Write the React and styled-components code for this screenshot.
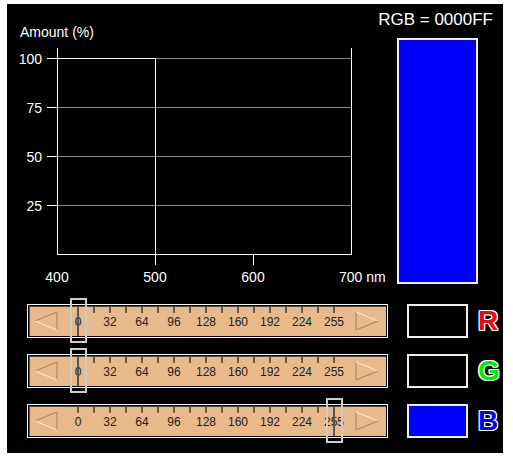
import styled, { createGlobalStyle } from "styled-components";

const GlobalStyle = createGlobalStyle`
    body {
        margin: 0;
        background: #ffffff;
        font-family: "Liberation Sans", Arial, sans-serif;
    }
`;

const channels = [
    {name: "R", value: 0, color: "#ff0000"},
    {name: "G", value: 0, color: "#00ee00"},
    {name: "B", value: 255, color: "#0000ff"},
];

const toHex = (v) => v.toString(16).padStart(2, "0").toUpperCase();

const Chart = () => {
    const gridY = [58.5, 107.5, 156.5, 205.5];
    const yLabels = ["100", "75", "50", "25"];
    return (
        <ChartSvg width="370" height="292" viewBox="7 4 370 292">
            <text x="20" y="37" fill="#fff" fontSize="14">Amount (%)</text>
            {gridY.map((y, i) => (
                <g key={y}>
                    <line x1="57" y1={y} x2="351" y2={y} stroke="#8c8c8c" strokeWidth="1"/>
                    <line x1="47" y1={y} x2="57" y2={y} stroke="#fff" strokeWidth="1"/>
                    <text x="42" y={y + 5} fill="#fff" fontSize="14" textAnchor="end">{yLabels[i]}</text>
                </g>
            ))}
            <line x1="57.5" y1="48" x2="57.5" y2="255" stroke="#fff"/>
            <line x1="351.5" y1="48" x2="351.5" y2="255" stroke="#fff"/>
            <line x1="57" y1="254.5" x2="352" y2="254.5" stroke="#fff"/>
            <line x1="155.5" y1="254" x2="155.5" y2="265" stroke="#fff"/>
            <line x1="253.5" y1="254" x2="253.5" y2="265" stroke="#fff"/>
            <polyline points="57.5,58.5 155.5,58.5 155.5,254.5" fill="none" stroke="#fff"/>
            <text x="57" y="282" fill="#fff" fontSize="14" textAnchor="middle">400</text>
            <text x="155" y="282" fill="#fff" fontSize="14" textAnchor="middle">500</text>
            <text x="253" y="282" fill="#fff" fontSize="14" textAnchor="middle">600</text>
            <text x="339" y="282" fill="#fff" fontSize="14">700 nm</text>
        </ChartSvg>
    );
};

const LeftArrow = () => (
    <svg width="33" height="30" viewBox="0 0 33 30">
        <line x1="6" y1="15" x2="28" y2="6" stroke="#a87f5c" strokeWidth="1"/>
        <line x1="28" y1="6" x2="28" y2="24" stroke="#a87f5c" strokeWidth="1"/>
        <line x1="6" y1="15" x2="28" y2="24" stroke="#fbeee0" strokeWidth="1"/>
    </svg>
);

const RightArrow = () => (
    <svg width="36" height="30" viewBox="0 0 36 30">
        <line x1="6" y1="6" x2="6" y2="24" stroke="#a87f5c" strokeWidth="1"/>
        <line x1="6" y1="6" x2="28" y2="15" stroke="#fbeee0" strokeWidth="1"/>
        <line x1="6" y1="24" x2="28" y2="15" stroke="#a87f5c" strokeWidth="1"/>
    </svg>
);

const labels = [0, 32, 64, 96, 128, 160, 192, 224, 255];

const Slider = ({value}) => (
    <Track>
        <Rail>
            <ArrowBox $w={33}><LeftArrow/></ArrowBox>
            <Scale>
                <Ticks>
                    {Array.from({length: 17}).map((_, i) => <Tick key={i}/>)}
                </Ticks>
                <Labels>
                    {labels.map((l) => <Label key={l}>{l}</Label>)}
                </Labels>
                <Thumb style={{left: 16 + value * 256 / 255 - 8.5}}/>
            </Scale>
            <ArrowBox $w={36}><RightArrow/></ArrowBox>
        </Rail>
    </Track>
);

const App = () => {
    const hex = channels.map((c) => toHex(c.value)).join("");
    return (
        <>
            <GlobalStyle/>
            <Panel>
                <TopSection>
                    <Chart/>
                    <ColorColumn>
                        <RgbText>RGB = {hex}</RgbText>
                        <Swatch $color={`#${hex}`}/>
                    </ColorColumn>
                </TopSection>
                <Controls>
                    {channels.map((c) => (
                        <ControlRow key={c.name}>
                            <Slider value={c.value}/>
                            <ChannelBox $color={c.value ? c.color : "#000"}/>
                            <ChannelLetter $color={c.color}>{c.name}</ChannelLetter>
                        </ControlRow>
                    ))}
                </Controls>
            </Panel>
        </>
    );
};

export default App;

const Panel = styled.div`
    box-sizing: border-box;
    width: 496px;
    height: 449px;
    margin: 4px 0 0 7px;
    background: #000000;
    display: flex;
    flex-direction: column;
`;

const TopSection = styled.div`
    display: flex;
    flex-direction: row;
    height: 292px;
`;

const ChartSvg = styled.svg`
    display: block;
    overflow: visible;
    font-family: "Liberation Sans", Arial, sans-serif;
`;

const ColorColumn = styled.div`
    flex: 1;
    display: flex;
    flex-direction: column;
    padding-top: 6px;
`;

const RgbText = styled.div`
    color: #ffffff;
    font-size: 17px;
    line-height: 20px;
    text-align: right;
    padding-right: 10px;
`;

const Swatch = styled.div`
    box-sizing: border-box;
    width: 81px;
    height: 246px;
    margin: 8px 0 0 20px;
    background: ${(p) => p.$color};
    border: 2px solid #f0f0f0;
`;

const Controls = styled.div`
    display: flex;
    flex-direction: column;
    gap: 16px;
    padding: 8px 0 0 20px;
`;

const ControlRow = styled.div`
    display: flex;
    flex-direction: row;
    align-items: center;
    height: 34px;
`;

const Track = styled.div`
    box-sizing: border-box;
    width: 361px;
    height: 34px;
    border: 1px solid #ffffff;
    background: #000000;
    padding: 1px;
`;

const Rail = styled.div`
    display: flex;
    flex-direction: row;
    height: 30px;
    background: #e8b98b;
    box-shadow: inset 1px 1px 0 #5e4a38;
`;

const ArrowBox = styled.div`
    width: ${(p) => p.$w}px;
    height: 30px;
    flex-shrink: 0;
    svg {
        display: block;
    }
`;

const Scale = styled.div`
    position: relative;
    width: 288px;
    height: 30px;
    display: flex;
    flex-direction: column;
`;

const Ticks = styled.div`
    display: flex;
    justify-content: space-between;
    width: 258px;
    height: 9px;
    margin-left: 15px;
`;

const Tick = styled.div`
    width: 2px;
    height: 7px;
    background: #6e5842;
`;

const Labels = styled.div`
    display: flex;
    flex-direction: row;
`;

const Label = styled.div`
    width: 32px;
    text-align: center;
    font-size: 12px;
    line-height: 14px;
    color: #1c1c1c;
`;

const Thumb = styled.div`
    position: absolute;
    top: -8px;
    box-sizing: border-box;
    width: 17px;
    height: 45px;
    border: 2px solid #cccccc;
    &::after {
        content: "";
        position: absolute;
        left: 50%;
        transform: translateX(-50%);
        top: 6px;
        bottom: 5px;
        width: 2px;
        background: #555555;
    }
`;

const ChannelBox = styled.div`
    box-sizing: border-box;
    width: 61px;
    height: 34px;
    margin-left: 19px;
    border: 2px solid #f0f0f0;
    background: ${(p) => p.$color};
`;

const ChannelLetter = styled.div`
    margin-left: 10px;
    font-size: 28px;
    font-weight: bold;
    color: ${(p) => p.$color};
    text-shadow: 1px 0 0 #fff, -1px 0 0 #fff, 0 1px 0 #fff, 0 -1px 0 #fff,
        1px 1px 0 #fff, -1px -1px 0 #fff, 1px -1px 0 #fff, -1px 1px 0 #fff;
`;
